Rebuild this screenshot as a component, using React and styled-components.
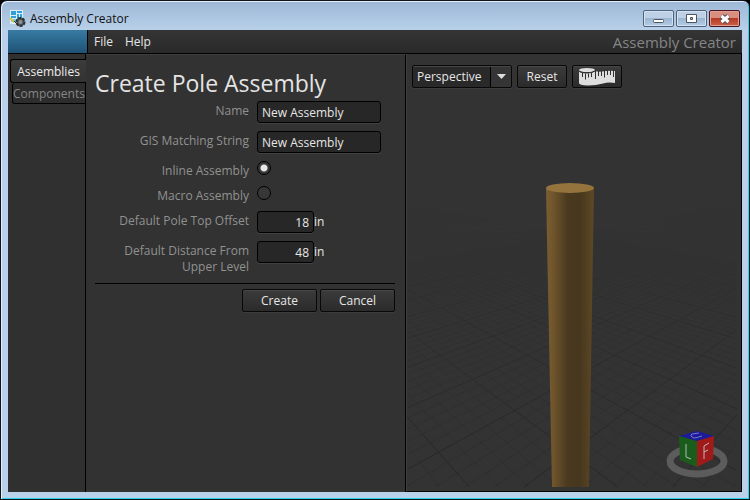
import { useState } from "react";
import styled, { createGlobalStyle, css } from "styled-components";

const GlobalStyle = createGlobalStyle`
  * {
    box-sizing: border-box;
  }

  body {
    margin: 0;
    background: #000000;
    color: #e6e6e6;
    font-family: "Open Sans", "Noto Sans", sans-serif;
    font-size: 12px;
    line-height: 16px;
  }

  button,
  input,
  select {
    font: inherit;
    color: inherit;
  }
`;

const raised = css`
  background: linear-gradient(#3b3b3b, #2b2b2b);
  border: 1px solid #080808;
  border-radius: 2px;
  box-shadow: inset 0 1px 0 #474747, 0 1px 0 #3c3c3c;
`;

const Window = styled.div`
  display: flex;
  flex-direction: column;
  min-height: 100vh;
  padding: 0 7px 7px;
  border: 1px solid #10161c;
  border-radius: 7px 7px 0 0;
  background: linear-gradient(#9db8d6, #b9d1ea 30px, #b9d1ea);
  box-shadow: inset 1px 1px 0 #e4eefa, inset -1px -1px 0 #27d3ee;
`;

const TitleBar = styled.header`
  display: flex;
  align-items: center;
  gap: 4px;
  height: 29px;
  padding: 6px 2px 0 1px;
  color: #101010;
`;

const WindowTitle = styled.span`
  flex: 1;
`;

const WindowButtons = styled.div`
  display: flex;
  gap: 2px;
`;

const WindowButton = styled.button`
  display: grid;
  place-items: center;
  width: 31px;
  height: 17px;
  padding: 0;
  border: 1px solid ${(p) => (p.$danger ? "#4a1420" : "#4f6378")};
  border-radius: 2px;
  box-shadow: inset 0 0 0 1px ${(p) => (p.$danger ? "#e0a194" : "#d3e2f3")};
  background: ${(p) =>
    p.$danger
      ? "linear-gradient(#d98f80 45%, #b83a24 50%, #c9624a)"
      : "linear-gradient(#bdd0e6 45%, #9cb6d2 50%, #b4cce6)"};
`;

const Client = styled.div`
  flex: 1;
  display: flex;
  flex-direction: column;
  background: #303030;
`;

const MenuBar = styled.nav`
  display: flex;
  align-items: center;
  height: 24px;
  padding-right: 6px;
  border-bottom: 1px solid #000000;
  background: linear-gradient(#353535, #292929);
`;

const BrandBlock = styled.div`
  width: 80px;
  align-self: stretch;
  border-right: 1px solid #000000;
  background: linear-gradient(#377ba3, #1f5275);
`;

const MenuButton = styled.button`
  padding: 0 6px;
  border: 0;
  background: none;
`;

const AppName = styled.span`
  margin-left: auto;
  color: #858585;
  font-size: 15px;
  line-height: 20px;
`;

const Workspace = styled.main`
  flex: 1;
  display: grid;
  grid-template-columns: 78px 320px 1fr;
`;

const TabList = styled.div`
  display: flex;
  flex-direction: column;
  align-items: flex-end;
  padding-top: 5px;
  border-right: 1px solid #000000;
`;

const Tab = styled.button`
  width: ${(p) => (p.$active ? 76 : 73)}px;
  height: ${(p) => (p.$active ? 24 : 21)}px;
  margin-right: ${(p) => (p.$active ? -1 : 0)}px;
  padding: 1px 0 0;
  border: 1px solid #000000;
  border-right: 0;
  border-top-width: ${(p) => (p.$active ? 1 : 0)}px;
  border-radius: 3px 0 0 3px;
  background: ${(p) => (p.$active ? "linear-gradient(#3c3c3c, #323232)" : "#2d2d2d")};
  color: ${(p) => (p.$active ? "#ececec" : "#858585")};
`;

const FormPanel = styled.form`
  padding: 15px 10px 0 9px;
  border-top: 1px solid #3f3f3f;
  border-right: 1px solid #000000;
  background: #323232;
`;

const Heading = styled.h1`
  margin: 0 0 5px;
  color: #e4e4e4;
  font-size: 23px;
  font-weight: 400;
  line-height: 26px;
`;

const Field = styled.div`
  display: grid;
  grid-template-columns: 154px 1fr;
  column-gap: 8px;
  align-items: start;
  margin-bottom: 8px;
`;

const FieldLabel = styled.label`
  padding-top: 2px;
  color: #919191;
  text-align: right;
`;

const FieldValue = styled.div`
  display: flex;
  align-items: center;
`;

const TextInput = styled.input`
  width: ${(p) => (p.$numeric ? 57 : 124)}px;
  height: 22px;
  padding: 0 4px;
  border: 1px solid #000000;
  border-radius: 3px;
  outline: 0;
  background: #272727;
  box-shadow: 0 1px 0 #424242;
  text-align: ${(p) => (p.$numeric ? "right" : "left")};
`;

const RadioRow = styled(Field)`
  height: 17px;
`;

const Radio = styled.input`
  appearance: none;
  width: 14px;
  height: 14px;
  margin: 0;
  border: 1px solid #000000;
  border-radius: 50%;
  background: #373737;

  &:checked {
    background: radial-gradient(circle, #e6e6e6 3px, #373737 4px);
  }
`;

const Actions = styled.div`
  display: flex;
  justify-content: flex-end;
  gap: 3px;
  padding-top: 5px;
  border-top: 1px solid #000000;
`;

const PushButton = styled.button`
  ${raised}
  display: grid;
  place-items: center;
  width: ${(p) => (p.$compact ? 50 : 75)}px;
  height: 23px;
  padding: 0;
`;

const ViewPanel = styled.section`
  display: flex;
  flex-direction: column;
  padding: 0 4px 4px 0;
  border: 1px solid #000000;
  border-width: 0 1px 1px 0;
  border-left: 1px solid #3f3f3f;
  background: #333333;
`;

const ViewTools = styled.div`
  display: flex;
  gap: 5px;
  padding: 11px 5px 0;
`;

const SelectBox = styled.div`
  position: relative;
  width: 100px;
  height: 23px;
`;

const Select = styled.select`
  ${raised}
  appearance: none;
  width: 100%;
  height: 100%;
  padding: 0 26px 0 4px;
  outline: 0;
  background: linear-gradient(90deg, #292929 77px, #000000 77px 78px, #353535 78px);
`;

const Arrow = styled.svg`
  position: absolute;
  top: 9px;
  right: 6px;
  pointer-events: none;
`;

const Viewport = styled.div`
  flex: 1;
  position: relative;
  min-height: 380px;
  overflow: hidden;
`;

const Scene = styled.svg`
  position: absolute;
  inset: 0;
  width: 100%;
  height: 100%;
`;

const AppIcon = () => (
  <svg width="17" height="17" viewBox="0 0 17 17" aria-hidden="true">
    <rect x="1" y="0" width="13" height="14" fill="#dceefa" />
    <path d="M2 1h5v4H2zM8 1h5v2H8zM8 4h2v5H8zM11 4h2v5h-2zM2 6h5v2H2z" fill="#2f9fd8" />
    <path d="M2 9h9v3H2z" fill="#7fc6ea" />
    <path d="M1 8l4 4" stroke="#d6c53a" strokeWidth="2" />
    <path d="M5 11l3 3" stroke="#333333" />
    <circle cx="11.500" cy="12" r="4" fill="#4f5559" stroke="#2c2f32" strokeWidth="2" strokeDasharray="3 1" />
    <circle cx="11.500" cy="12" r="2" fill="#8a9196" />
  </svg>
);

const MinimizeIcon = () => (
  <svg width="12" height="10" viewBox="0 0 12 10" aria-hidden="true">
    <rect x="0.500" y="5.500" width="10" height="3" rx="1" fill="#ffffff" stroke="#4c5560" />
  </svg>
);

const MaximizeIcon = () => (
  <svg width="12" height="10" viewBox="0 0 12 10" aria-hidden="true">
    <path d="M0.500.5h10v8h-10zM4.500 3.500v2h2v-2z" fill="#ffffff" fillRule="evenodd" stroke="#4c5560" />
  </svg>
);

const CloseIcon = () => (
  <svg width="12" height="10" viewBox="0 0 12 10" aria-hidden="true">
    <path d="M2.500 2l7 6M9.500 2l-7 6" stroke="#4a4f5c" strokeWidth="5" />
    <path d="M2.500 2l7 6M9.500 2l-7 6" stroke="#ffffff" strokeWidth="3" />
  </svg>
);

const TapeIcon = () => (
  <svg width="38" height="19" viewBox="0 0 38 19" aria-hidden="true">
    <path
      d="M1 4q0 2 8 2q6 0 8-2q3 1 7 .5q6-1 13-.5V16q-7-1-12 .5q-7 2-15 2Q1 18 1 16z"
      fill="#dedede"
    />
    <ellipse cx="9" cy="3" rx="8" ry="2" fill="#dedede" />
    <path
      d="M1.500 4.500q2 1.500 7.500 1.500t8-2M4.500 6v4M7.500 6.500v6M10.500 6.500v4M13.500 6v4M17.500 4v8M20.500 4v5M23.500 4v5M26.500 3.500v7M29.500 3v5M32.500 3v5M35.500 3v7"
      fill="none"
      stroke="#2e2e2e"
    />
  </svg>
);

const CENTER = 164;
const HORIZON = 80;
const FOCAL = 384;
const STEP = 0.0932;
const REACH = 340;

// Two families of ground lines, each running out from its own vanishing point.
const GroundGrid = () => (
  <g stroke="#232323" fill="none">
    {Array.from({ length: 60 }, (_, i) => {
      const run = 0.419 + i * STEP;
      return [1, -1].map((dir) => (
        <line
          key={`${i}${dir}`}
          x1={CENTER - dir * FOCAL}
          y1={HORIZON}
          x2={CENTER - dir * (FOCAL - run * REACH)}
          y2={HORIZON + REACH}
          strokeOpacity={i % 5 === 0 ? 0.7 : 0.28}
        />
      ));
    })}
  </g>
);

const PoleScene = () => (
  <Scene viewBox="0 0 330 399" preserveAspectRatio="xMidYMax slice" role="img" aria-label="Pole preview">
    <defs>
      <linearGradient id="wood" x1="0" x2="1" y1="0" y2="0">
        <stop offset="0" stopColor="#7b5e31" />
        <stop offset="0.15" stopColor="#70552c" />
        <stop offset="0.45" stopColor="#49391f" />
        <stop offset="0.7" stopColor="#46371e" />
        <stop offset="1" stopColor="#5f4825" />
      </linearGradient>
      <linearGradient id="haze" x1="0" x2="0" y1="0" y2="1">
        <stop offset="0.3" stopColor="#000000" />
        <stop offset="0.6" stopColor="#777777" />
        <stop offset="1" stopColor="#ffffff" />
      </linearGradient>
      <mask id="fade">
        <rect width="330" height="399" fill="url(#haze)" />
      </mask>
    </defs>
    <g mask="url(#fade)">
      <GroundGrid />
    </g>
    <path d="M139 100L145 399H182L187 100z" fill="url(#wood)" />
    <ellipse cx="163" cy="100" rx="24" ry="5" fill="#94733d" />
    <ellipse cx="290" cy="373" rx="27" ry="13" fill="none" stroke="#5c5c5c" strokeWidth="7" />
    <path d="M272 348L290 343L307 348L290 353z" fill="#1b1b9c" />
    <path d="M272 348L290 353V379L273 372z" fill="#1a5c1c" />
    <path d="M307 348L290 353V379L306 371z" fill="#a01a1a" />
    <g fill="none" stroke="#b9b9b9">
      <path d="M279 356V369L284 371" />
      <path d="M297 371V358L302 355M297 364L301 362" />
      <path d="M292 345L285 346Q282 348 287 350Q289 350 295 348" stroke="#7777c4" />
    </g>
  </Scene>
);

export default function App() {
  const [tab, setTab] = useState("Assemblies");
  const [name, setName] = useState("New Assembly");
  const [gisString, setGisString] = useState("New Assembly");
  const [kind, setKind] = useState("inline");
  const [topOffset, setTopOffset] = useState("18");
  const [distance, setDistance] = useState("48");

  return (
    <>
      <GlobalStyle />
      <Window>
        <TitleBar>
          <AppIcon />
          <WindowTitle>Assembly Creator</WindowTitle>
          <WindowButtons>
            <WindowButton aria-label="Minimize">
              <MinimizeIcon />
            </WindowButton>
            <WindowButton aria-label="Maximize">
              <MaximizeIcon />
            </WindowButton>
            <WindowButton $danger aria-label="Close">
              <CloseIcon />
            </WindowButton>
          </WindowButtons>
        </TitleBar>

        <Client>
          <MenuBar>
            <BrandBlock />
            <MenuButton>File</MenuButton>
            <MenuButton>Help</MenuButton>
            <AppName>Assembly Creator</AppName>
          </MenuBar>

          <Workspace>
            <TabList role="tablist">
              {["Assemblies", "Components"].map((label) => (
                <Tab
                  key={label}
                  role="tab"
                  aria-selected={tab === label}
                  $active={tab === label}
                  onClick={() => setTab(label)}
                >
                  {label}
                </Tab>
              ))}
            </TabList>

            <FormPanel onSubmit={(e) => e.preventDefault()}>
              <Heading>Create Pole Assembly</Heading>
              <Field>
                <FieldLabel htmlFor="name">Name</FieldLabel>
                <TextInput id="name" value={name} onChange={(e) => setName(e.target.value)} />
              </Field>
              <Field>
                <FieldLabel htmlFor="gis">GIS Matching String</FieldLabel>
                <TextInput id="gis" value={gisString} onChange={(e) => setGisString(e.target.value)} />
              </Field>
              <RadioRow>
                <FieldLabel htmlFor="inline">Inline Assembly</FieldLabel>
                <Radio
                  type="radio"
                  id="inline"
                  name="kind"
                  checked={kind === "inline"}
                  onChange={() => setKind("inline")}
                />
              </RadioRow>
              <RadioRow>
                <FieldLabel htmlFor="macro">Macro Assembly</FieldLabel>
                <Radio
                  type="radio"
                  id="macro"
                  name="kind"
                  checked={kind === "macro"}
                  onChange={() => setKind("macro")}
                />
              </RadioRow>
              <Field>
                <FieldLabel htmlFor="offset">Default Pole Top Offset</FieldLabel>
                <FieldValue>
                  <TextInput
                    $numeric
                    id="offset"
                    value={topOffset}
                    onChange={(e) => setTopOffset(e.target.value)}
                  />
                  in
                </FieldValue>
              </Field>
              <Field>
                <FieldLabel htmlFor="distance">
                  Default Distance From
                  <br />
                  Upper Level
                </FieldLabel>
                <FieldValue>
                  <TextInput
                    $numeric
                    id="distance"
                    value={distance}
                    onChange={(e) => setDistance(e.target.value)}
                  />
                  in
                </FieldValue>
              </Field>
              <Actions>
                <PushButton type="submit">Create</PushButton>
                <PushButton type="button">Cancel</PushButton>
              </Actions>
            </FormPanel>

            <ViewPanel>
              <ViewTools>
                <SelectBox>
                  <Select aria-label="Camera" defaultValue="Perspective">
                    <option>Perspective</option>
                    <option>Orthographic</option>
                  </Select>
                  <Arrow width="9" height="5" viewBox="0 0 9 5" aria-hidden="true">
                    <path d="M0 0h9L4.500 5z" fill="#dddddd" />
                  </Arrow>
                </SelectBox>
                <PushButton $compact>Reset</PushButton>
                <PushButton $compact aria-label="Measure">
                  <TapeIcon />
                </PushButton>
              </ViewTools>
              <Viewport>
                <PoleScene />
              </Viewport>
            </ViewPanel>
          </Workspace>
        </Client>
      </Window>
    </>
  );
}
